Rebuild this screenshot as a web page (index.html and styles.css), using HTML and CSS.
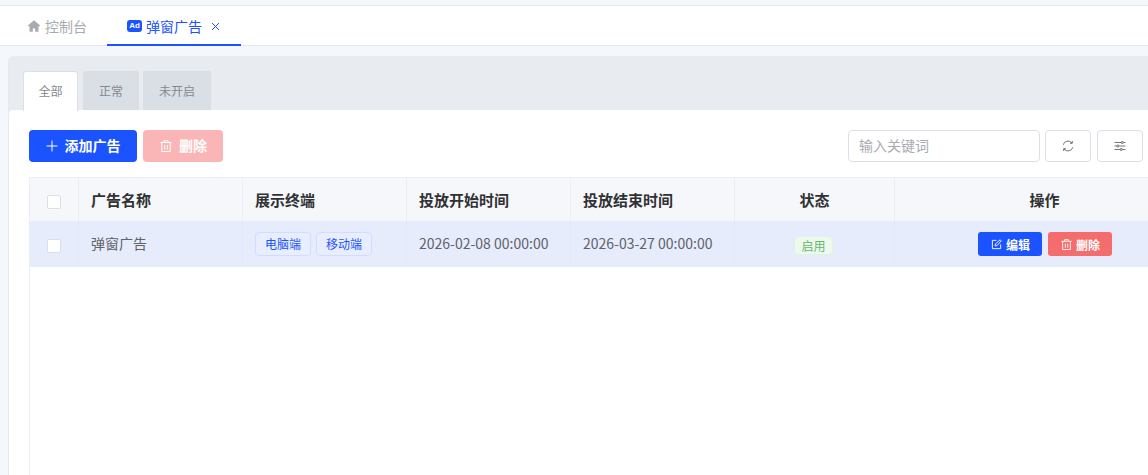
FILE: index.html
```html
<!DOCTYPE html>
<html lang="zh-CN">
<head>
<meta charset="utf-8">
<title>弹窗广告</title>
<link rel="stylesheet" href="styles.css">
</head>
<body>
<div class="app">
  <nav class="nav-tabs">
    <a class="nav-tab nav-home">
      <svg class="ico-home" viewBox="0 0 12 12"><path d="M6 .3 .2 5.300c-.4.400-.2 1 .4 1h.9v4.700c0 .4.300.7.700.7h2.600V8.600h2.400v3.100h2.600c.4 0 .7-.3.700-.7V6.300h.9c.6 0 .8-.6.400-1z" fill="currentColor"/></svg>
      <span>控制台</span>
    </a>
    <a class="nav-tab nav-active">
      <span class="ad-badge">Ad</span>
      <span>弹窗广告</span>
      <svg class="ico-close" viewBox="0 0 9 9"><path d="M1 1l7 7M8 1 1 8" stroke="currentColor" fill="none"/></svg>
    </a>
  </nav>
  <main class="content">
    <section class="card">
      <div class="sub-tabs">
        <div class="sub-tab sub-active">全部</div>
        <div class="sub-tab">正常</div>
        <div class="sub-tab sub-last">未开启</div>
      </div>
      <div class="panel">
        <div class="toolbar">
          <button class="btn btn-primary">
            <svg class="ico-plus" viewBox="0 0 12 12"><path d="M6 .5v11M.5 6h11" stroke="currentColor" fill="none"/></svg>
            <span>添加广告</span>
          </button>
          <button class="btn btn-danger-off">
            <svg class="ico-trash" viewBox="0 0 12 12"><path d="M.5 2.500h11M4 2.500V.7h4v1.800M1.800 2.500v9h8.400v-9M4.700 5v4.500M7.300 5v4.500" stroke="currentColor" fill="none"/></svg>
            <span>删除</span>
          </button>
          <div class="spacer"></div>
          <div class="search">输入关键词</div>
          <button class="icon-btn">
            <svg class="ico-s" viewBox="0 0 12 12"><path d="M1.200 4.800A5 5 0 0 1 10 3M10.800 7.200A5 5 0 0 1 2 9M10.300 1v2.300H8M1.700 11V8.700H4" stroke="currentColor" fill="none"/></svg>
          </button>
          <button class="icon-btn icon-btn-last">
            <svg class="ico-s" viewBox="0 0 12 12"><path d="M.5 2.500h11M.5 6h11M.5 9.500h11" stroke="currentColor" fill="none"/><path d="M7.500 1.500h1.500v2H7.500zM3 5h1.500v2H3zM6.500 8.500H8v2H6.500z" fill="#fff" stroke="currentColor" stroke-width=".8"/></svg>
          </button>
        </div>
        <div class="table-box">
          <table class="grid">
            <colgroup>
              <col class="c1"><col class="c2"><col class="c3"><col class="c4"><col class="c5"><col class="c6"><col class="c7">
            </colgroup>
            <thead>
              <tr>
                <th class="center"><span class="check"></span></th>
                <th>广告名称</th>
                <th>展示终端</th>
                <th>投放开始时间</th>
                <th>投放结束时间</th>
                <th class="center">状态</th>
                <th class="center">操作</th>
              </tr>
            </thead>
            <tbody>
              <tr>
                <td class="center"><span class="check"></span></td>
                <td class="cell-text">弹窗广告</td>
                <td class="tags"><span class="tag">电脑端</span><span class="tag">移动端</span></td>
                <td class="cell-text">2026-02-08 00:00:00</td>
                <td class="cell-text">2026-03-27 00:00:00</td>
                <td class="center"><span class="state">启用</span></td>
                <td class="center op-cell">
                  <button class="mini mini-blue"><svg class="ico-mini" viewBox="0 0 12 12"><path d="M6 1.500H1.500v9h9V6M4.500 7.500l.3-2L10 .8l1.200 1.200L6.500 7.200z" stroke="currentColor" fill="none"/></svg><span>编辑</span></button>
                  <button class="mini mini-red"><svg class="ico-mini" viewBox="0 0 12 12"><path d="M.5 2.500h11M4 2.500V.7h4v1.800M1.800 2.500v9h8.400v-9M4.700 5v4.500M7.300 5v4.500" stroke="currentColor" fill="none"/></svg><span>删除</span></button>
                </td>
              </tr>
            </tbody>
          </table>
        </div>
      </div>
    </section>
  </main>
</div>
</body>
</html>
```

FILE: styles.css
```css
* { box-sizing: border-box; }
html, body { margin: 0; height: 100%; overflow: hidden; }
body {
  font-family: "Noto Sans CJK SC", "Noto Sans", sans-serif;
  font-size: 14px;
  color: #606266;
  background: #f4f7fb;
}
.app { width: 1148px; height: 475px; overflow: hidden; padding-top: 5px; }

.nav-tabs {
  height: 41px;
  background: #fff;
  border-top: 1px solid #e6e8ee;
  border-bottom: 1px solid #e4e7ed;
  display: flex;
}
.nav-tab { display: flex; align-items: center; height: 40px; font-size: 14px; line-height: 20px; }
.nav-home { width: 107px; padding-left: 28px; color: #a8abb2; gap: 5px; }
.ico-home { width: 12px; height: 12px; }
.nav-active {
  width: 134px;
  padding: 2px 0 0 20px;
  color: #1a53ff;
  border-bottom: 2px solid #1a53ff;
  gap: 4px;
}
.ad-badge {
  width: 15px;
  height: 12px;
  border-radius: 3px;
  background: #1a53ff;
  color: #fff;
  font-family: "Liberation Sans", sans-serif;
  font-size: 8px;
  font-weight: 700;
  line-height: 12px;
  text-align: center;
}
.ico-close { width: 9px; height: 9px; margin-left: 5px; }

.content { padding: 10px 0 0 8px; }
.card {
  background: #e8ecf0;
  border-radius: 6px 0 0 0;
  padding-top: 15px;
  width: 1140px;
  height: 440px;
  border-left: 1px solid #e8e8f0;
}
.sub-tabs { display: flex; gap: 5px; padding-left: 14px; height: 39px; }
.sub-tab {
  width: 56px;
  height: 39px;
  background: #d9dfe5;
  border-radius: 3px 3px 0 0;
  font-size: 12px;
  line-height: 40px;
  text-align: center;
  color: #85888e;
}
.sub-last { width: 68px; margin-left: -1px; }
.sub-active {
  width: 55px;
  background: #fff;
  border: 1px solid #dcdfe6;
  border-bottom: 0;
  line-height: 38px;
  height: 40px;
  position: relative;
  z-index: 1;
}
.panel {
  background: #fff;
  height: 385px;
  border-radius: 4px 0 0 0;
  padding: 20px 5px 0 20px;
}
.toolbar { display: flex; align-items: center; height: 32px; }
.btn {
  height: 32px;
  border: 0;
  border-radius: 4px;
  color: #fff;
  font: inherit;
  font-weight: 700;
  display: flex;
  align-items: center;
  justify-content: center;
  gap: 7px;
  padding: 0 0 2px;
}
.btn-primary { width: 108px; background: #1a53ff; }
.btn-danger-off { width: 80px; margin-left: 6px; padding-left: 1px; background: #fab6b6; }
.ico-plus { width: 12px; height: 12px; margin-top: 2px; }
.ico-trash { width: 12px; height: 12px; margin-top: 2px; }
.spacer { flex: 1; }
.search {
  width: 192px;
  height: 32px;
  border: 1px solid #dcdfe6;
  border-radius: 4px;
  padding-left: 10px;
  line-height: 28px;
  color: #a8abb2;
  background: #fff;
}
.icon-btn {
  width: 46px;
  height: 32px;
  margin-left: 5px;
  background: #fff;
  border: 1px solid #dcdfe6;
  border-radius: 4px;
  color: #73767a;
  padding: 0;
  display: flex;
  align-items: center;
  justify-content: center;
}
.icon-btn-last { margin-left: 6px; }
.ico-s { width: 12px; height: 12px; }

.table-box { margin-top: 15px; height: 320px; width: 1200px; border-left: 1px solid #ebeef5; border-top: 1px solid #ebeef5; }
.grid { border-collapse: separate; border-spacing: 0; table-layout: fixed; width: 1165px; }
.c1 { width: 49px; }
.c2 { width: 164px; }
.c3 { width: 164px; }
.c4 { width: 164px; }
.c5 { width: 164px; }
.c6 { width: 160px; }
.c7 { width: 300px; }
th {
  height: 43px;
  background: #f5f7fb;
  color: #303133;
  font-weight: 700;
  font-size: 15px;
  text-align: left;
  padding: 0 12px 1px;
  border-right: 1px solid #ebeef5;
}
td {
  height: 46px;
  background: #e7ecfd;
  padding: 0 12px;
  border-right: 1px solid #e3e8f8;
  font-size: 14px;
  color: #606266;
}
.cell-text { padding-bottom: 2px; }
.center { text-align: center; }
th:first-child, td:first-child { padding: 0; }
.check {
  display: inline-block;
  width: 14px;
  height: 14px;
  background: #fff;
  border: 1px solid #dcdfe6;
  border-radius: 2px;
  vertical-align: middle;
}
.tags { font-size: 0; }
.tag {
  display: inline-block;
  width: 56px;
  height: 24px;
  border: 1px solid #d1ddff;
  border-radius: 4px;
  background: #e8eeff;
  color: #1a53ff;
  font-size: 12px;
  line-height: 22px;
  text-align: center;
  margin-right: 5px;
  vertical-align: middle;
}
.state {
  display: inline-block;
  width: 39px;
  height: 19px;
  margin-right: 2px;
  border: 1px solid #dff3df;
  border-radius: 4px;
  background: #eef9ee;
  color: #5dbb6d;
  font-size: 12px;
  line-height: 18px;
  vertical-align: middle;
}
.op-cell { font-size: 0; }
.mini {
  display: inline-flex;
  align-items: center;
  justify-content: center;
  gap: 4px;
  width: 64px;
  height: 24px;
  border: 0;
  border-radius: 3px;
  color: #fff;
  font-family: inherit;
  font-size: 12px;
  font-weight: 700;
  padding: 0 0 0 2px;
  vertical-align: middle;
}
.mini-blue { background: #1a53ff; }
.mini-red { background: #f56c6c; margin-left: 6px; }
.ico-mini { width: 11px; height: 11px; }
```
